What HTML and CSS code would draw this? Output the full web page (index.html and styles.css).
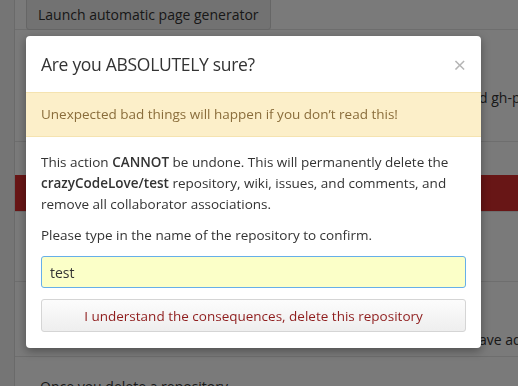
FILE: index.html
```html
<!DOCTYPE html>
<html lang="en">
<head>
    <meta charset="UTF-8">
    <title>Delete repository</title>
    <link rel="stylesheet" href="styles.css">
</head>
<body>
    <!-- Página de fondo (settings) -->
    <div class="page">
        <div class="section section-top">
            <button class="btn-launch">Launch automatic page generator</button>
        </div>
        <div class="section section-pages">
            <p class="note"><span class="lead">Your site is built from the branch name</span>d gh-pages branch.</p>
        </div>
        <div class="danger-bar"></div>
        <div class="section section-mid"></div>
        <div class="section section-transfer">
            <p class="note"><span class="lead">Transfer this to another user who will h</span>ave admin access.</p>
        </div>
        <div class="section section-last">
            <p class="note-left">Once you delete a repository</p>
        </div>
    </div>

    <div class="overlay"></div>

    <!-- Modal de confirmación -->
    <div class="modal">
        <div class="modal-header">
            <h3>Are you ABSOLUTELY sure?</h3>
            <span class="close">&times;</span>
        </div>
        <div class="flash-warn">Unexpected bad things will happen if you don’t read this!</div>
        <div class="modal-body">
            <p>This action <strong>CANNOT</strong> be undone. This will permanently delete the
               <strong>crazyCodeLove/test</strong> repository, wiki, issues, and comments, and
               remove all collaborator associations.</p>
            <p>Please type in the name of the repository to confirm.</p>
            <input type="text" class="confirm-input" value="test">
            <button class="btn-danger">I understand the consequences, delete this repository</button>
        </div>
    </div>
</body>
</html>
```

FILE: styles.css
```css
body {
    margin: 0;
    background-color: #f5f5f5;
    font-family: 'Open Sans', 'Noto Sans', sans-serif;
    font-size: 14px;
    color: #333;
    overflow: hidden;
}
.page {
    margin-left: 14px;
    min-height: 400px;
    background-color: #fff;
    border-left: 1px solid #ddd;
}
.section {
    border-bottom: 1px solid #e5e5e5;
}
.section-top {
    height: 35px;
    padding-left: 11px;
}
.btn-launch {
    display: block;
    margin-top: -6px;
    height: 36px;
    padding: 4px 11px 0;
    background-color: #eee;
    border: 1px solid #d5d5d5;
    border-radius: 3px;
    font-family: inherit;
    font-size: 14px;
    color: #333;
}
.section-pages {
    height: 111px;
    position: relative;
}
.note {
    margin: 0;
    position: absolute;
    left: 464px;
    top: 58px;
    white-space: nowrap;
    color: #333;
}
.note .lead {
    position: absolute;
    right: 100%;
}
.danger-bar {
    margin-top: 33px;
    height: 36px;
    background-color: #d92e2e;
}
.section-mid {
    height: 69px;
    border-top: 1px solid #e5e5e5;
}
.section-transfer {
    height: 74px;
    position: relative;
}
.section-transfer .note {
    top: 48px;
}
.section-last {
    height: 40px;
}
.note-left {
    margin: 0;
    padding: 20px 0 0 25px;
    white-space: nowrap;
}

.overlay {
    position: fixed;
    inset: 0;
    background-color: rgba(0, 0, 0, 0.52);
}

/* Modal */
.modal {
    position: absolute;
    left: 26px;
    top: 36px;
    width: 455px;
    background-color: #fff;
    border-radius: 4px;
    box-shadow: 0 3px 10px rgba(0, 0, 0, 0.35);
    overflow: hidden;
}
.modal-header {
    display: flex;
    justify-content: space-between;
    align-items: center;
    height: 56px;
    padding: 0 15px;
}
.modal-header h3 {
    margin: 0;
    font-size: 17.5px;
    font-weight: normal;
    letter-spacing: -0.3px;
    color: #333;
}
.close {
    font-size: 22px;
    color: #b5b5b5;
    line-height: 1;
}
.flash-warn {
    padding: 12px 15px 13px;
    background-color: #fcefc9;
    border-top: 1px solid #f5e3b0;
    border-bottom: 1px solid #f5e3b0;
    color: #8a6d3b;
    font-size: 13.5px;
}
.modal-body {
    padding: 15px 15px 16px;
}
.modal-body p {
    margin: 0 0 10px;
    line-height: 21px;
    font-size: 13.5px;
}
.modal-body strong {
    font-weight: 600;
}
.confirm-input {
    display: block;
    box-sizing: border-box;
    width: 100%;
    height: 32px;
    padding: 0 8px;
    background-color: #fbffc8;
    border: 1px solid #66afe9;
    border-radius: 3px;
    font-family: inherit;
    font-size: 14px;
    color: #333;
    outline: none;
}
.btn-danger {
    display: block;
    box-sizing: border-box;
    width: 100%;
    height: 33px;
    margin-top: 11px;
    background: linear-gradient(#fcfcfc, #eee);
    border: 1px solid #d5d5d5;
    border-radius: 3px;
    font-family: inherit;
    font-size: 13.5px;
    color: #8f1d1d;
}
```
